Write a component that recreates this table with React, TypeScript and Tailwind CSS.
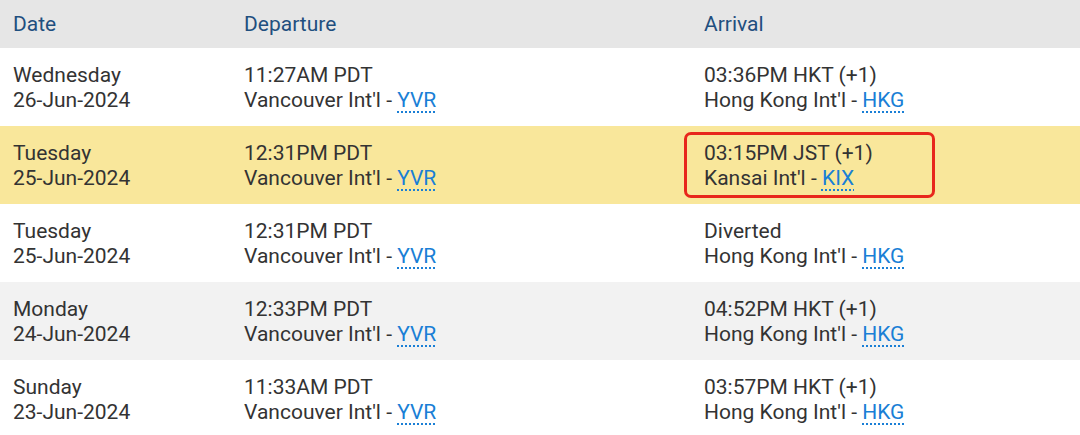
import React from "react";

type Flight = {
  day: string;
  date: string;
  depTime: string;
  depPort: string;
  depCode: string;
  arrTime: string;
  arrPort: string;
  arrCode: string;
  bg: string;
  flagged?: boolean;
};

const flights: Flight[] = [
  {
    day: "Wednesday",
    date: "26-Jun-2024",
    depTime: "11:27AM PDT",
    depPort: "Vancouver Int'l",
    depCode: "YVR",
    arrTime: "03:36PM HKT (+1)",
    arrPort: "Hong Kong Int'l",
    arrCode: "HKG",
    bg: "bg-white",
  },
  {
    day: "Tuesday",
    date: "25-Jun-2024",
    depTime: "12:31PM PDT",
    depPort: "Vancouver Int'l",
    depCode: "YVR",
    arrTime: "03:15PM JST (+1)",
    arrPort: "Kansai Int'l",
    arrCode: "KIX",
    bg: "bg-[#f9e79b]",
    flagged: true,
  },
  {
    day: "Tuesday",
    date: "25-Jun-2024",
    depTime: "12:31PM PDT",
    depPort: "Vancouver Int'l",
    depCode: "YVR",
    arrTime: "Diverted",
    arrPort: "Hong Kong Int'l",
    arrCode: "HKG",
    bg: "bg-white",
  },
  {
    day: "Monday",
    date: "24-Jun-2024",
    depTime: "12:33PM PDT",
    depPort: "Vancouver Int'l",
    depCode: "YVR",
    arrTime: "04:52PM HKT (+1)",
    arrPort: "Hong Kong Int'l",
    arrCode: "HKG",
    bg: "bg-[#f2f2f2]",
  },
  {
    day: "Sunday",
    date: "23-Jun-2024",
    depTime: "11:33AM PDT",
    depPort: "Vancouver Int'l",
    depCode: "YVR",
    arrTime: "03:57PM HKT (+1)",
    arrPort: "Hong Kong Int'l",
    arrCode: "HKG",
    bg: "bg-white",
  },
];

const Code = ({ code }: { code: string }) => (
  <span className="text-[#1a7fd6] underline decoration-dotted decoration-2 decoration-[#1a7fd6] underline-offset-[4px]">
    {code}
  </span>
);

const cols = "grid grid-cols-[231px_460px_1fr] pl-[13px]";

export default function App() {
  return (
    <div className="w-[1080px] h-[435px] overflow-hidden bg-white font-['Roboto',sans-serif] text-[21px] leading-[25px] text-[#333]">
      <div className={`${cols} h-[48px] items-center bg-[#e6e6e6] text-[#1f4f7f]`}>
        <div>Date</div>
        <div>Departure</div>
        <div>Arrival</div>
      </div>
      {flights.map((f, i) => (
        <div key={i} className={`${cols} h-[78px] pt-[15px] ${f.bg}`}>
          <div>
            <div>{f.day}</div>
            <div>{f.date}</div>
          </div>
          <div>
            <div>{f.depTime}</div>
            <div>
              {f.depPort} - <Code code={f.depCode} />
            </div>
          </div>
          <div className="relative">
            {f.flagged && (
              <div className="absolute -left-[20px] -top-[9px] w-[251px] h-[66px] rounded-[7px] border-[3px] border-[#e8271c]" />
            )}
            <div>{f.arrTime}</div>
            <div>
              {f.arrPort} - <Code code={f.arrCode} />
            </div>
          </div>
        </div>
      ))}
    </div>
  );
}
